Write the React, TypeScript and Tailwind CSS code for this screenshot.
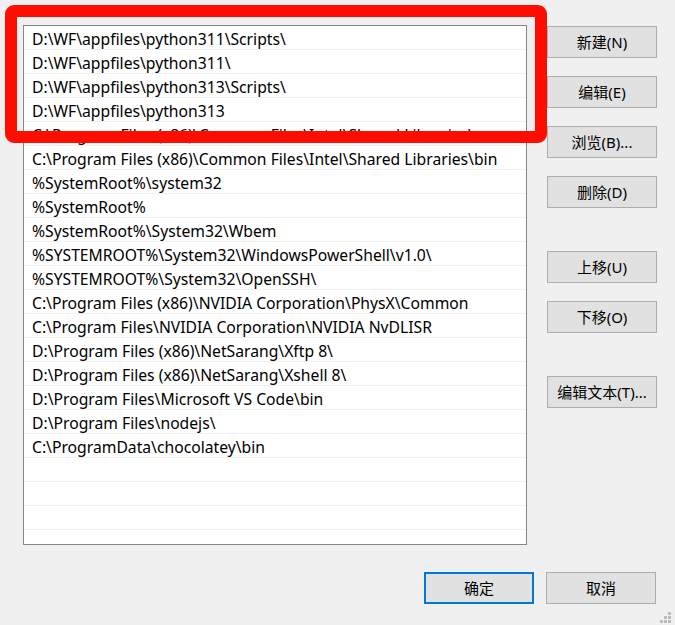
import React from "react";

const rows = [
  "D:\\WF\\appfiles\\python311\\Scripts\\",
  "D:\\WF\\appfiles\\python311\\",
  "D:\\WF\\appfiles\\python313\\Scripts\\",
  "D:\\WF\\appfiles\\python313",
  "C:\\Program Files (x86)\\Common Files\\Intel\\Shared Libraries\\redist\\intel64\\compiler",
  "C:\\Program Files (x86)\\Common Files\\Intel\\Shared Libraries\\bin",
  "%SystemRoot%\\system32",
  "%SystemRoot%",
  "%SystemRoot%\\System32\\Wbem",
  "%SYSTEMROOT%\\System32\\WindowsPowerShell\\v1.0\\",
  "%SYSTEMROOT%\\System32\\OpenSSH\\",
  "C:\\Program Files (x86)\\NVIDIA Corporation\\PhysX\\Common",
  "C:\\Program Files\\NVIDIA Corporation\\NVIDIA NvDLISR",
  "D:\\Program Files (x86)\\NetSarang\\Xftp 8\\",
  "D:\\Program Files (x86)\\NetSarang\\Xshell 8\\",
  "D:\\Program Files\\Microsoft VS Code\\bin",
  "D:\\Program Files\\nodejs\\",
  "C:\\ProgramData\\chocolatey\\bin",
  "",
  "",
  "",
  "",
];

function Btn({ children, primary, className = "" }: { children: React.ReactNode; primary?: boolean; className?: string }) {
  return (
    <div
      className={
        "w-[110px] h-[32px] flex items-center justify-center bg-[#e1e1e1] text-[15px] text-black " +
        (primary ? "border-2 border-[#0078d7] " : "border border-[#adadad] ") +
        className
      }
    >
      {children}
    </div>
  );
}

export default function App() {
  return (
    <div
      className="relative w-[675px] h-[625px] bg-[#f0f0f0] overflow-hidden"
      style={{ fontFamily: '"Noto Sans", "Noto Sans CJK SC", sans-serif' }}
    >
      <div className="flex pt-[25px] pl-[23px]">
        <div className="w-[504px] h-[520px] bg-white border border-[#868686] overflow-hidden">
          {rows.map((r, i) => (
            <div
              key={i}
              className="h-[24px] border-b border-[#f0f0f0] pl-[8px] pr-[22px] pt-[3px] text-[15.7px] leading-[20px] text-black whitespace-nowrap overflow-hidden text-ellipsis"
            >
              {r}
            </div>
          ))}
        </div>
        <div className="flex flex-col ml-[20px] mt-[1px]">
          <Btn>新建(N)</Btn>
          <Btn className="mt-[18px]">编辑(E)</Btn>
          <Btn className="mt-[18px]">浏览(B)...</Btn>
          <Btn className="mt-[18px]">删除(D)</Btn>
          <Btn className="mt-[43px]">上移(U)</Btn>
          <Btn className="mt-[18px]">下移(O)</Btn>
          <Btn className="mt-[43px]">编辑文本(T)...</Btn>
        </div>
      </div>
      <div className="flex pl-[424px] mt-[27px] gap-[12px]">
        <Btn primary>确定</Btn>
        <Btn>取消</Btn>
      </div>

      {/* red highlight overlay */}
      <div className="absolute left-[5px] top-[5px] w-[542px] h-[138px] border-[12px] border-[#ff0d00] rounded-[9px]" />

      {/* size grip */}
      <div className="absolute left-[668px] top-[612px] w-[3px] h-[3px] bg-[#bcbcbc]" />
      <div className="absolute left-[664px] top-[616px] w-[3px] h-[3px] bg-[#bcbcbc]" />
      <div className="absolute left-[668px] top-[616px] w-[3px] h-[3px] bg-[#bcbcbc]" />
      <div className="absolute left-[660px] top-[620px] w-[3px] h-[3px] bg-[#bcbcbc]" />
      <div className="absolute left-[664px] top-[620px] w-[3px] h-[3px] bg-[#bcbcbc]" />
      <div className="absolute left-[668px] top-[620px] w-[3px] h-[3px] bg-[#bcbcbc]" />
    </div>
  );
}
